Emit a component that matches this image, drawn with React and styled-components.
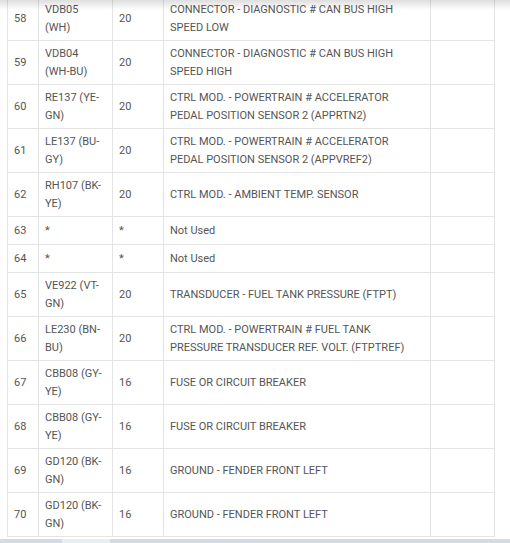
import styled, { createGlobalStyle } from "styled-components"

const rows = [
  { pin: "58", circuit: "VDB05 (WH)", gauge: "20", func: "CONNECTOR - DIAGNOSTIC # CAN BUS HIGH SPEED LOW" },
  { pin: "59", circuit: "VDB04 (WH-BU)", gauge: "20", func: "CONNECTOR - DIAGNOSTIC # CAN BUS HIGH SPEED HIGH" },
  { pin: "60", circuit: "RE137 (YE-GN)", gauge: "20", func: "CTRL MOD. - POWERTRAIN # ACCELERATOR PEDAL POSITION SENSOR 2 (APPRTN2)" },
  { pin: "61", circuit: "LE137 (BU-GY)", gauge: "20", func: "CTRL MOD. - POWERTRAIN # ACCELERATOR PEDAL POSITION SENSOR 2 (APPVREF2)" },
  { pin: "62", circuit: "RH107 (BK-YE)", gauge: "20", func: "CTRL MOD. - AMBIENT TEMP. SENSOR" },
  { pin: "63", circuit: "*", gauge: "*", func: "Not Used" },
  { pin: "64", circuit: "*", gauge: "*", func: "Not Used" },
  { pin: "65", circuit: "VE922 (VT-GN)", gauge: "20", func: "TRANSDUCER - FUEL TANK PRESSURE (FTPT)" },
  { pin: "66", circuit: "LE230 (BN-BU)", gauge: "20", func: "CTRL MOD. - POWERTRAIN # FUEL TANK PRESSURE TRANSDUCER REF. VOLT. (FTPTREF)" },
  { pin: "67", circuit: "CBB08 (GY-YE)", gauge: "16", func: "FUSE OR CIRCUIT BREAKER" },
  { pin: "68", circuit: "CBB08 (GY-YE)", gauge: "16", func: "FUSE OR CIRCUIT BREAKER" },
  { pin: "69", circuit: "GD120 (BK-GN)", gauge: "16", func: "GROUND - FENDER FRONT LEFT" },
  { pin: "70", circuit: "GD120 (BK-GN)", gauge: "16", func: "GROUND - FENDER FRONT LEFT" },
]

const GlobalStyle = createGlobalStyle`
  html, body {
    margin: 0;
    padding: 0;
    background: #fff;
    overflow: hidden;
  }
  body {
    font-family: Roboto, "Liberation Sans", sans-serif;
  }
`

export default function App() {
  return (
    <Page>
      <GlobalStyle />
      <TopShadow />
      <TableWrap>
        <PinTable>
          <colgroup>
            <col style={{ width: 31 }} />
            <col style={{ width: 74 }} />
            <col style={{ width: 51 }} />
            <col style={{ width: 267 }} />
            <col style={{ width: 64 }} />
          </colgroup>
          <tbody>
            {rows.map((r) => (
              <Row key={r.pin}>
                <Cell>{r.pin}</Cell>
                <Cell>{r.circuit}</Cell>
                <Cell>{r.gauge}</Cell>
                <Cell>{r.func}</Cell>
                <Cell />
              </Row>
            ))}
          </tbody>
        </PinTable>
      </TableWrap>
      <ScrollTrack>
        <ScrollThumb />
      </ScrollTrack>
    </Page>
  )
}

const Page = styled.div`
  position: relative;
  width: 510px;
  height: 543px;
  overflow: hidden;
  background: #fff;
`

const TopShadow = styled.div`
  position: absolute;
  top: 0;
  left: 0;
  right: 0;
  height: 10px;
  background: linear-gradient(to bottom, rgba(0, 0, 0, 0.13), rgba(0, 0, 0, 0));
  pointer-events: none;
  z-index: 2;
`

const TableWrap = styled.div`
  margin-top: -4px;
  padding-left: 7px;
`

const PinTable = styled.table`
  border-collapse: collapse;
  table-layout: fixed;
  width: 488px;
  font-size: 11px;
  color: #555;
`

const Row = styled.tr`
  height: 28px;
`

const Cell = styled.td`
  border: 1px solid #e4e4e4;
  padding: 4px 10px 4px 6px;
  line-height: 17.5px;
  vertical-align: middle;
  text-align: left;
`

const ScrollTrack = styled.div`
  margin-top: 2px;
  height: 6px;
  background: #d4dce3;
  padding-left: 62px;
`

const ScrollThumb = styled.div`
  width: 48px;
  height: 100%;
  background: #e9eef2;
`
